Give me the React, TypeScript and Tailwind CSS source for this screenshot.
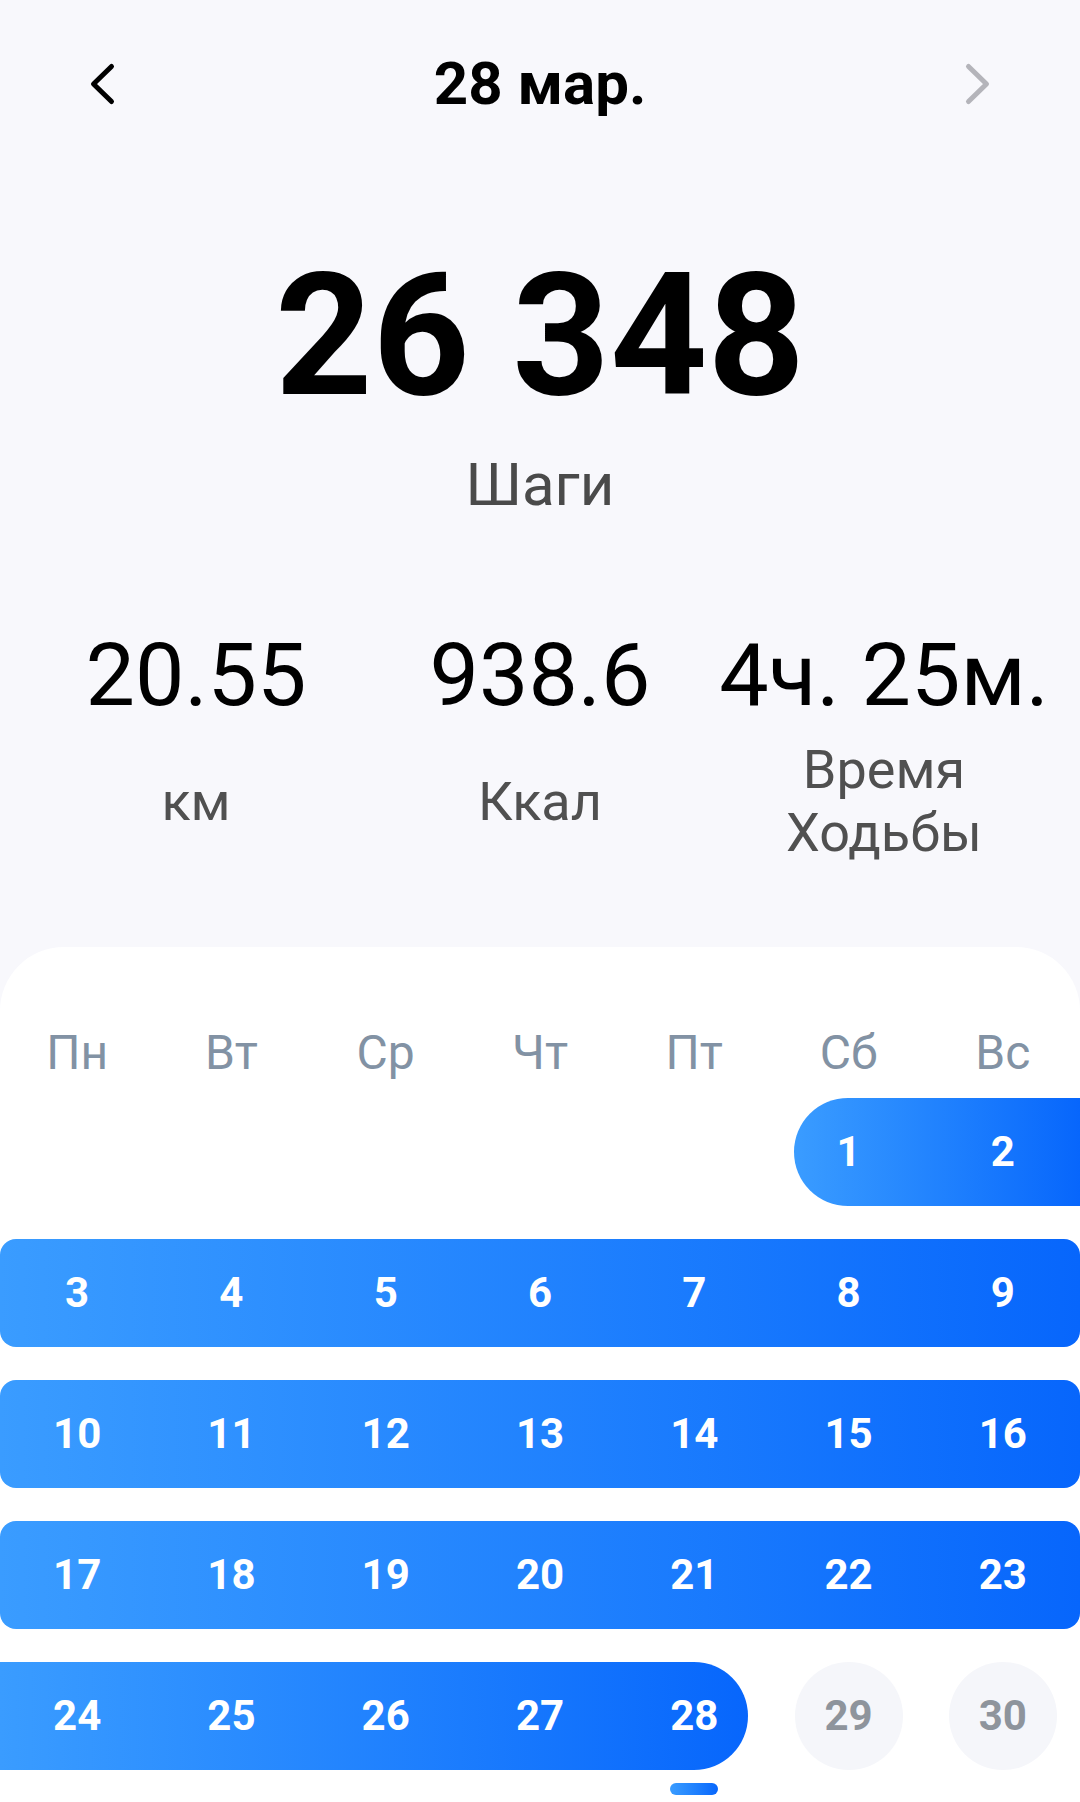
import React from 'react';

const DAYS = ['Пн', 'Вт', 'Ср', 'Чт', 'Пт', 'Сб', 'Вс'];

const Chevron = ({ dir, color }: { dir: 'left' | 'right'; color: string }) => (
  <svg width="28" height="44" viewBox="0 0 28 44" fill="none">
    <polyline
      points={dir === 'left' ? '23.5,4.5 5.5,22 23.5,39.5' : '4.5,4.5 22.5,22 4.5,39.5'}
      stroke={color}
      strokeWidth="5"
      strokeLinecap="round"
      strokeLinejoin="round"
    />
  </svg>
);

const DayNum = ({ n }: { n: number }) => (
  <div className="flex items-center justify-center text-[42px] font-bold leading-none text-white">{n}</div>
);

const App = () => {
  const stats = [
    { value: '20.55', label: 'км' },
    { value: '938.6', label: 'Ккал' },
    { value: '4ч. 25м.', label: 'Время Ходьбы' },
  ];

  return (
    <div className="flex min-h-[1802px] w-full flex-col bg-[#f8f8fc] font-['Roboto',sans-serif]">
      {/* Header */}
      <div className="flex h-[168px] items-center justify-between px-[88px]">
        <Chevron dir="left" color="#000000" />
        <div className="text-[60px] font-bold leading-none text-black">28 мар.</div>
        <Chevron dir="right" color="#b4b4ba" />
      </div>

      {/* Steps */}
      <div className="mt-[83px] text-center text-[170px] font-bold leading-none text-black">26 348</div>
      <div className="mt-[34px] text-center text-[60px] leading-none text-[#4a4a4a]">Шаги</div>

      {/* Stats */}
      <div className="mt-[116px] grid grid-cols-3 px-[24px]">
        {stats.map((s) => (
          <div key={s.value} className="flex flex-col items-center">
            <div className="whitespace-nowrap text-[88px] leading-none text-black">{s.value}</div>
            <div className="mt-[19px] flex h-[126px] w-[240px] items-center justify-center text-center text-[54px] leading-[63px] text-[#505050]">
              {s.label}
            </div>
          </div>
        ))}
      </div>

      {/* Calendar card */}
      <div className="mt-[83px] flex-1 rounded-t-[64px] bg-white pt-[82px]">
        <div className="grid grid-cols-7 text-center text-[48px] leading-none text-[#8292a4]">
          {DAYS.map((d) => (
            <div key={d}>{d}</div>
          ))}
        </div>

        <div className="mt-[21px] flex flex-col gap-[33px]">
          {/* week 1 */}
          <div className="grid h-[108px] grid-cols-7">
            <div className="col-span-2 col-start-6 ml-[23px] rounded-l-full rounded-r-[16px] bg-gradient-to-r from-[#3a9cff] to-[#0766fc]">
              <div className="-ml-[23px] grid h-full w-[calc(100%+23px)] grid-cols-2">
                <DayNum n={1} />
                <DayNum n={2} />
              </div>
            </div>
          </div>

          {/* full weeks */}
          {[3, 10, 17].map((start) => (
            <div key={start} className="grid h-[108px] grid-cols-1">
              <div className="grid grid-cols-7 rounded-[16px] bg-gradient-to-r from-[#3a9cff] to-[#0766fc]">
                {Array.from({ length: 7 }, (_, i) => (
                  <DayNum key={i} n={start + i} />
                ))}
              </div>
            </div>
          ))}

          {/* week 5 */}
          <div className="grid h-[108px] grid-cols-7">
            <div className="col-span-5 mr-[23px] rounded-l-[16px] rounded-r-full bg-gradient-to-r from-[#3a9cff] to-[#0766fc]">
              <div className="grid h-full w-[calc(100%+23px)] grid-cols-5">
                {[24, 25, 26, 27, 28].map((n) => (
                  <DayNum key={n} n={n} />
                ))}
              </div>
            </div>
            {[29, 30].map((n) => (
              <div key={n} className="flex items-center justify-center">
                <div className="flex h-[108px] w-[108px] items-center justify-center rounded-full bg-[#f5f6fa] text-[42px] font-bold leading-none text-[#8e949c]">
                  {n}
                </div>
              </div>
            ))}
          </div>
        </div>

        {/* selected day indicator */}
        <div className="mt-[13px] grid grid-cols-7">
          <div className="col-start-5 flex justify-center">
            <div className="h-[12px] w-[48px] rounded-full bg-gradient-to-r from-[#3a9cff] to-[#0766fc]" />
          </div>
        </div>
      </div>
    </div>
  );
};

export default App;
